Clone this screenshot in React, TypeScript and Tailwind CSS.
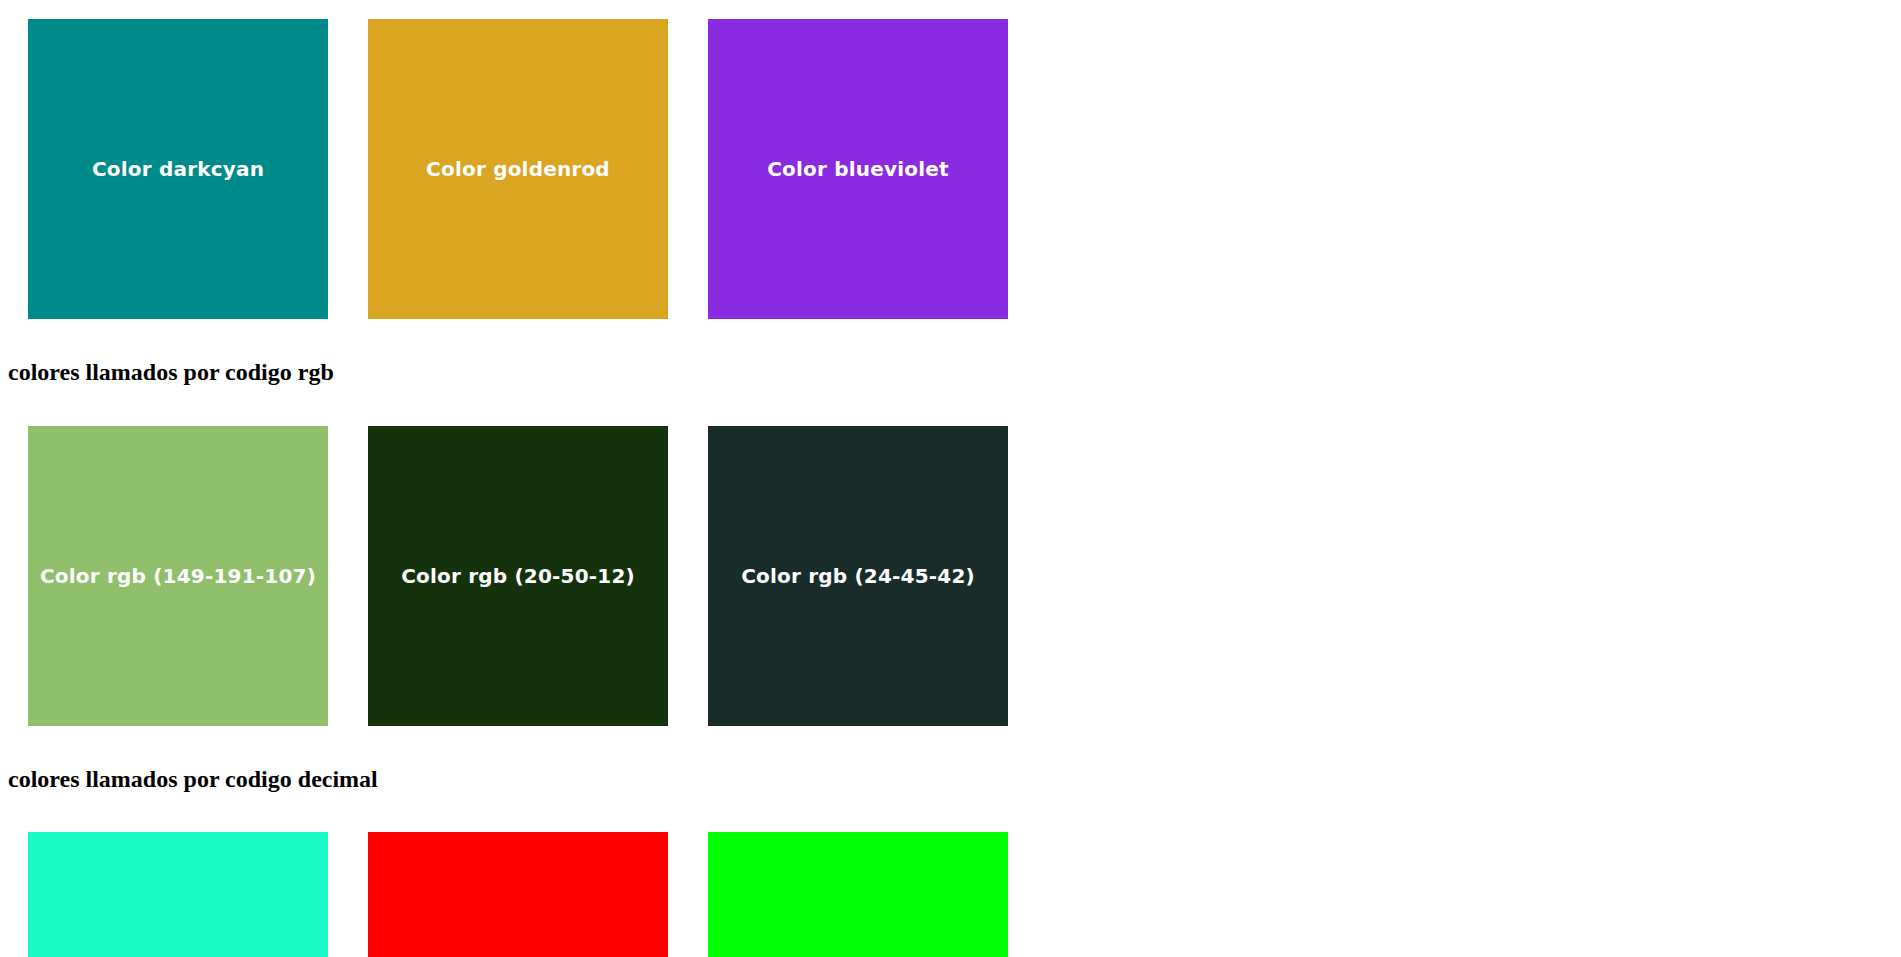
const sections = [
  {
    title: null,
    boxes: [
      { bg: "bg-[#008b8b]", label: "Color darkcyan" },
      { bg: "bg-[#daa520]", label: "Color goldenrod" },
      { bg: "bg-[#8a2be2]", label: "Color blueviolet" },
    ],
  },
  {
    title: "colores llamados por codigo rgb",
    boxes: [
      { bg: "bg-[#8fbf6b]", label: "Color rgb (149-191-107)" },
      { bg: "bg-[#14320c]", label: "Color rgb (20-50-12)" },
      { bg: "bg-[#182d2a]", label: "Color rgb (24-45-42)" },
    ],
  },
  {
    title: "colores llamados por codigo decimal",
    boxes: [
      { bg: "bg-[#1afac6]", label: "" },
      { bg: "bg-[#ff0000]", label: "" },
      { bg: "bg-[#00ff00]", label: "" },
    ],
  },
];

export default function App() {
  return (
    <div className="bg-white min-h-screen pt-[19px] pb-10 font-['Liberation_Serif',serif] text-black">
      {sections.map((section, i) => (
        <div key={i}>
          {section.title && (
            <h2 className="mt-[40px] mb-[39.5px] ml-[8px] text-[24px] leading-[27px] font-bold">
              {section.title}
            </h2>
          )}
          <div className="flex gap-[40px] pl-[28px]">
            {section.boxes.map((box, j) => (
              <div
                key={j}
                className={`${box.bg} w-[300px] h-[300px] flex items-center justify-center`}
              >
                <span className="font-['DejaVu_Sans',sans-serif] font-bold text-white text-[20px] tracking-[0.2px]">
                  {box.label}
                </span>
              </div>
            ))}
          </div>
        </div>
      ))}
    </div>
  );
}
